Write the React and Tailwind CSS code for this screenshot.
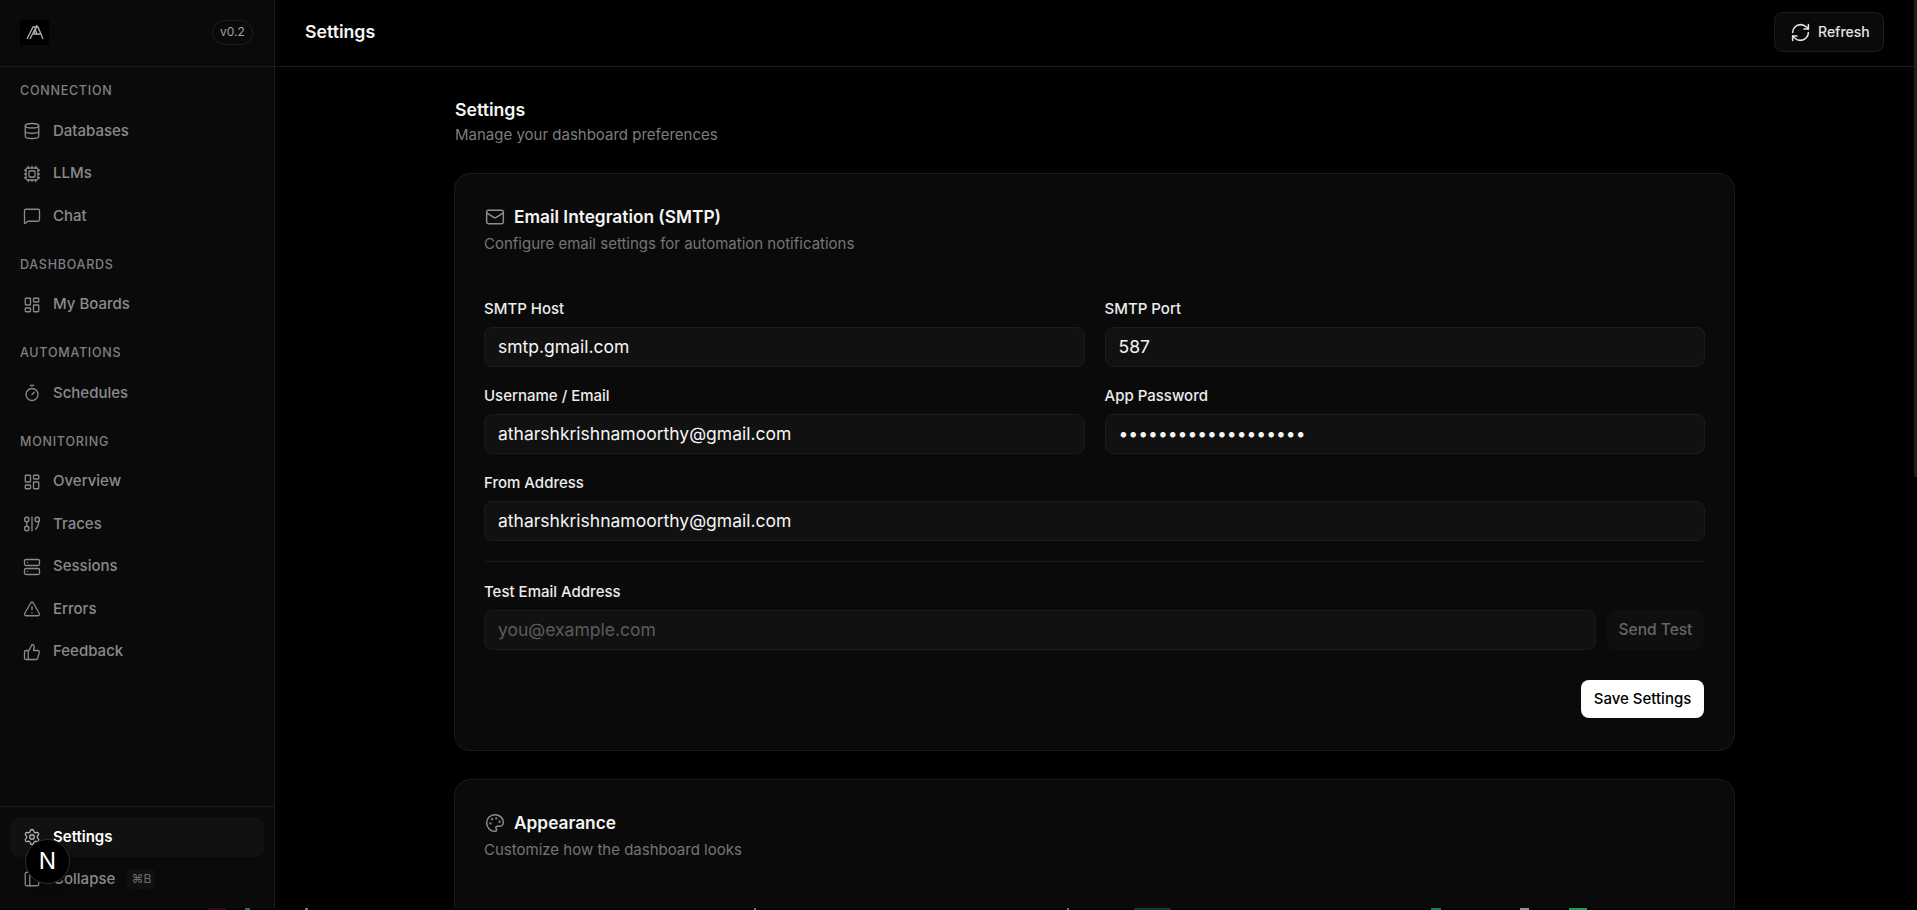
import React from 'react';
import {
  Database, Cpu, MessageSquare, LayoutDashboard, Timer, Server, TriangleAlert,
  ThumbsUp, Settings, PanelLeft, Mail, Palette, RefreshCw,
} from 'lucide-react';

const font = { fontFamily: 'Inter, "Liberation Sans", sans-serif' };

function TracesIcon({ size = 18, strokeWidth = 1.75, className }) {
  return (
    <svg width={size} height={size} viewBox="0 0 24 24" fill="none" stroke="currentColor" strokeWidth={strokeWidth} strokeLinecap="round" strokeLinejoin="round" className={className}>
      <circle cx="5" cy="6" r="3" />
      <circle cx="5" cy="18" r="3" />
      <path d="M5 9v6" />
      <path d="M12 3v18" />
      <circle cx="19" cy="6" r="3" />
      <path d="M21.5 8c-.5 4-2 8-4.500 11" />
    </svg>
  );
}

const SECTIONS = [
  { title: 'CONNECTION', items: [['Databases', Database], ['LLMs', Cpu], ['Chat', MessageSquare]] },
  { title: 'DASHBOARDS', items: [['My Boards', LayoutDashboard]] },
  { title: 'AUTOMATIONS', items: [['Schedules', Timer]] },
  {
    title: 'MONITORING',
    items: [['Overview', LayoutDashboard], ['Traces', TracesIcon], ['Sessions', Server], ['Errors', TriangleAlert], ['Feedback', ThumbsUp]],
  },
];

const inputClass = "w-full h-10 px-[13px] pb-px bg-[#111111] border border-[#1c1c1c] rounded-lg text-[17.500px] text-[#f5f5f5] outline-none placeholder:text-[#5c5c5c]";
const labelClass = "block h-[17px] leading-[17px] mb-[10px] text-[15px] font-medium text-[#ededed]";

function Field({ label, value, type = 'text' }) {
  return (
    <div>
      <label className={labelClass}>{label}</label>
      <input type={type} defaultValue={value} className={inputClass} />
    </div>
  );
}

function NavRow({ label, Icon }) {
  return (
    <div className="flex items-center gap-3 h-10 px-[13px] rounded-lg text-[#8a8a8a]">
      <Icon size={18} strokeWidth={1.75} className="shrink-0" />
      <span className="text-[15px] font-medium">{label}</span>
    </div>
  );
}

export default function App() {
  return (
    <div style={font} className="relative flex flex-col h-[910px] bg-black overflow-hidden">
      <div className="flex h-[908px]">
        {/* sidebar */}
        <aside className="flex flex-col w-[275px] shrink-0 bg-[#0a0a0a] border-r border-[#1c1c1c]">
          <div className="flex items-center justify-between h-[67px] shrink-0 pl-5 pr-[21px] pb-[2px] border-b border-[#1c1c1c]">
            <div className="flex items-center justify-center w-[29px] h-[25px] bg-black">
              <svg width="18" height="16" viewBox="0 0 18 16" fill="none" stroke="#b0b0b0" strokeWidth="1.300">
                <path d="M1 15 7 3h5l5 12" />
                <path d="M4 15 9 5l2 5" />
                <path d="M11 1 8 10h7" />
              </svg>
            </div>
            <span className="flex items-center justify-center w-[41px] h-[25px] rounded-full border border-[#1f1f1f] text-xs text-[#a1a1a1]">v0.2</span>
          </div>

          <nav className="flex-1 pt-4 px-[10px]">
            {SECTIONS.map((s) => (
              <div key={s.title} className="mb-[20.500px]">
                <div className="h-4 leading-4 mb-3 px-[10px] text-[12.500px] font-medium tracking-[0.06em] text-[#808080]">{s.title}</div>
                <div className="flex flex-col gap-[2.500px]">
                  {s.items.map(([label, Icon]) => <NavRow key={label} label={label} Icon={Icon} />)}
                </div>
              </div>
            ))}
          </nav>

          <div className="h-[102px] shrink-0 pt-[10px] px-[10px] border-t border-[#1c1c1c]">
            <div className="flex items-center gap-3 h-10 px-[13px] rounded-[10px] bg-[#111111] text-white">
              <Settings size={18} strokeWidth={1.75} className="text-[#b0b0b0] shrink-0" />
              <span className="text-[15px] font-semibold">Settings</span>
            </div>
            <div className="flex items-center gap-3 h-10 mt-[2px] px-[13px] text-[#8a8a8a]">
              <PanelLeft size={18} strokeWidth={1.75} className="shrink-0" />
              <span className="text-[15px] font-medium">Collapse</span>
              <span className="flex items-center justify-center w-7 h-5 rounded bg-[#101010] text-xs text-[#6e6e6e]">⌘B</span>
            </div>
          </div>
        </aside>

        {/* main */}
        <main className="flex-1 min-w-0 flex flex-col">
          <header className="flex items-center justify-between h-[67px] shrink-0 px-[30px] pb-[2px] border-b border-[#1c1c1c]">
            <h1 className="text-[17.700px] font-semibold text-[#f5f5f5]">Settings</h1>
            <button className="flex items-center gap-[7px] w-[110px] h-10 pl-[15px] rounded-lg bg-[#0a0a0a] border border-[#1c1c1c] text-sm font-medium text-[#e5e5e5]">
              <RefreshCw size={21} strokeWidth={1.75} />
              Refresh
            </button>
          </header>

          <div className="flex-1 overflow-hidden">
            <div className="w-[1281px] mx-auto pt-[32px]">
              <h2 className="h-[22px] leading-[22px] pl-px text-[17.700px] font-semibold text-[#f5f5f5]">Settings</h2>
              <p className="mt-[4px] h-5 leading-5 pl-px text-[15px] text-[#7d7d7d]">Manage your dashboard preferences</p>

              <section className="mt-[28px] h-[578px] px-[29px] pt-[31px] bg-[#0a0a0a] border border-[#1a1a1a] rounded-2xl">
                <div className="flex items-center gap-[9px] h-6 pl-px">
                  <Mail size={20} strokeWidth={1.75} className="text-[#8f8f8f]" />
                  <span className="text-[17.300px] font-semibold text-[#f5f5f5]">Email Integration (SMTP)</span>
                </div>
                <p className="mt-[5px] h-5 leading-5 text-[15px] text-[#757575]">Configure email settings for automation notifications</p>

                <div className="grid grid-cols-2 gap-x-5 gap-y-5 mt-[46px]">
                  <Field label="SMTP Host" value="smtp.gmail.com" />
                  <Field label="SMTP Port" value="587" />
                  <Field label="Username / Email" value="atharshkrishnamoorthy@gmail.com" />
                  <Field label="App Password" value="1234567890123456789" type="password" />
                  <div className="col-span-2">
                    <Field label="From Address" value="atharshkrishnamoorthy@gmail.com" />
                  </div>
                </div>

                <div className="mt-5 h-px bg-[#1a1a1a]" />

                <label className={labelClass + " mt-[21px]"}>Test Email Address</label>
                <div className="flex gap-[11px] pr-px">
                  <input placeholder="you@example.com" className={inputClass + " flex-1"} />
                  <button className="w-[97px] h-10 shrink-0 rounded-lg bg-[#0f0f0f] text-[15.500px] font-medium text-[#666666]">Send Test</button>
                </div>

                <div className="flex justify-end mt-[30px] pr-px">
                  <button className="w-[123px] h-[38px] rounded-lg bg-white text-[15px] font-medium text-black">Save Settings</button>
                </div>
              </section>

              <section className="mt-[28px] h-[400px] px-[29px] pt-[31px] bg-[#0a0a0a] border border-[#1a1a1a] rounded-2xl">
                <div className="flex items-center gap-[9px] h-6 pl-px">
                  <Palette size={20} strokeWidth={1.75} className="text-[#8f8f8f]" />
                  <span className="text-[17.300px] font-semibold text-[#f5f5f5]">Appearance</span>
                </div>
                <p className="mt-[5px] h-5 leading-5 text-[15px] text-[#757575]">Customize how the dashboard looks</p>
              </section>
            </div>
          </div>
        </main>

        {/* scrollbar */}
        <div className="w-[3px] shrink-0">
          <div className="h-[477px] bg-[#1f1f1f]" />
        </div>
      </div>

      {/* sliver of the next row at the bottom edge */}
      <div className="flex h-[2px] bg-black">
        <div className="ml-[208px] w-[18px] bg-[#2a1018]" />
        <div className="ml-[19px] w-[5px] bg-[#2f6f5c]" />
        <div className="ml-[55px] w-[3px] bg-[#777777]" />
        <div className="ml-[446px] w-[2px] bg-[#777777]" />
        <div className="ml-[311px] w-[2px] bg-[#777777]" />
        <div className="ml-[65px] w-[37px] bg-[#0f3d2c]" />
        <div className="ml-[260px] w-[10px] bg-[#15805a]" />
        <div className="ml-[79px] w-[9px] bg-[#8a9a90]" />
        <div className="ml-[40px] w-[18px] bg-[#1f9a5c]" />
      </div>

      {/* dev indicator */}
      <div className="absolute left-[25px] top-[839px] flex items-center justify-center w-[45px] h-[45px] rounded-full bg-black border border-[#2e2e2e] text-[23px] font-normal text-white shadow-lg">
        N
      </div>
    </div>
  );
}
